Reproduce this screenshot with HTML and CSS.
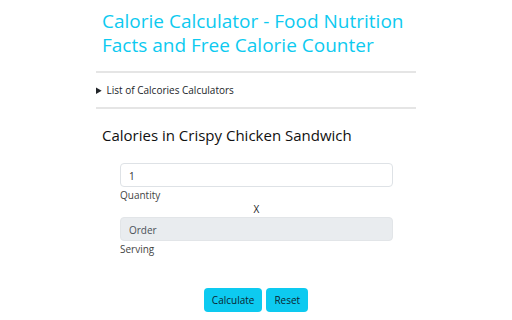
FILE: index.html
```html
<!DOCTYPE html>
<html>
<head>
<meta charset="utf-8">
<link rel="stylesheet" href="styles.css">
</head>
<body>
<div class="container">
  <h1 class="title">Calorie Calculator - Food Nutrition Facts and Free Calorie Counter</h1>
  <hr class="rule">
  <details class="list">
    <summary>List of Calcories Calculators</summary>
  </details>
  <hr class="rule">
  <h2 class="subtitle">Calories in Crispy Chicken Sandwich</h2>
  <div class="form">
    <div class="field">1</div>
    <div class="label">Quantity</div>
    <div class="times">X</div>
    <div class="field disabled">Order</div>
    <div class="label">Serving</div>
  </div>
  <div class="buttons">
    <button class="btn">Calculate</button>
    <button class="btn">Reset</button>
  </div>
</div>
</body>
</html>
```
FILE: styles.css
```css
html, body {
  margin: 0;
  padding: 0;
  background: #fff;
}
body {
  font-family: "Open Sans", "Noto Sans", sans-serif;
  color: #212529;
}
.container {
  width: 320px;
  margin: 0 auto;
  padding-top: 9px;
}
.title {
  margin: 0;
  padding: 0 6px;
  font-size: 19px;
  line-height: 24px;
  font-weight: 500;
  color: #0dcaf0;
}
.rule {
  margin: 14px 0 0;
  border: 0;
  border-top: 2px solid #e5e5e5;
}
.list {
  font-size: 10px;
  line-height: 14px;
  padding: 10px 0 10px;
  color: #212529;
}
.list summary {
  cursor: pointer;
}
.list + .rule {
  margin-top: 0;
}
.subtitle {
  margin: 16px 0 0;
  padding: 0 6px;
  font-size: 15px;
  line-height: 20px;
  font-weight: 500;
  color: #111;
}
.form {
  margin: 18px 23px 0 24px;
  font-size: 10px;
  line-height: 14px;
}
.field {
  height: 24px;
  box-sizing: border-box;
  border: 1px solid #dee2e6;
  border-radius: 4px;
  padding: 5px 8px;
  color: #333;
  background: #fff;
}
.field.disabled {
  background: #e9ecef;
  border-color: #e2e5e8;
  color: #495057;
}
.label {
  color: #444;
  margin-top: 1px;
}
.times {
  text-align: center;
  margin-bottom: 1px;
  color: #222;
}
.buttons {
  display: flex;
  justify-content: center;
  gap: 4px;
  margin-top: 32px;
}
.btn {
  font-family: inherit;
  font-size: 10px;
  height: 24px;
  padding: 0 8px;
  border: 0;
  border-radius: 4px;
  background: #0dcaf0;
  color: #0b2530;
}
```
